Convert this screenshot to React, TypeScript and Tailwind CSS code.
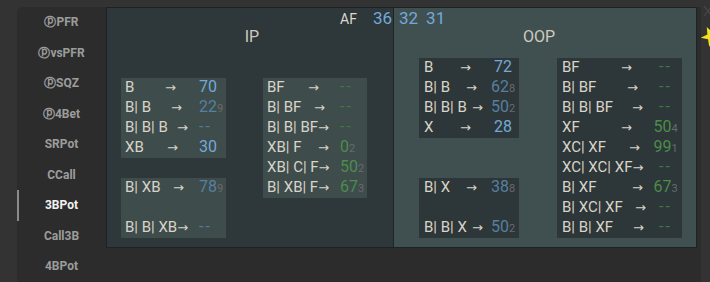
import React from 'react';

type Tone = 'b' | 'd' | 'g' | 'db' | 'dg';

interface Line {
  l: string;
  w: string;
  v: string;
  s?: string;
  c: Tone;
}

const toneClass: Record<Tone, string> = {
  b: 'text-[#74a9d9]',
  d: 'text-[#56809f]',
  g: 'text-[#4b8d4b]',
  db: 'text-[#587a95] tracking-[2px]',
  dg: 'text-[#3d7b3d] tracking-[2px]',
};

const navItems = ['ⓟPFR', 'ⓟvsPFR', 'ⓟSQZ', 'ⓟ4Bet', 'SRPot', 'CCall', '3BPot', 'Call3B', '4BPot'];

// IP side
const ipLeftA: Line[] = [
  { l: 'B', w: 'w-[40px]', v: '70', c: 'b' },
  { l: 'B| B', w: 'w-[46px]', v: '22', s: '9', c: 'd' },
  { l: 'B| B| B', w: 'w-[52px]', v: '--', c: 'db' },
  { l: 'XB', w: 'w-[42px]', v: '30', c: 'b' },
];
const ipLeftB: (Line | null)[] = [
  { l: 'B| XB', w: 'w-[48px]', v: '78', s: '9', c: 'd' },
  null,
  { l: 'B| B| XB', w: 'w-auto', v: '--', c: 'db' },
];
const ipRight: Line[] = [
  { l: 'BF', w: 'w-[41px]', v: '--', c: 'dg' },
  { l: 'B| BF', w: 'w-[47px]', v: '--', c: 'dg' },
  { l: 'B| B| BF', w: 'w-auto', v: '--', c: 'dg' },
  { l: 'XB| F', w: 'w-[51px]', v: '0', s: '2', c: 'g' },
  { l: 'XB| C| F', w: 'w-auto', v: '50', s: '2', c: 'g' },
  { l: 'B| XB| F', w: 'w-auto', v: '67', s: '3', c: 'g' },
];

// OOP side
const oopLeftA: Line[] = [
  { l: 'B', w: 'w-[36px]', v: '72', c: 'b' },
  { l: 'B| B', w: 'w-[42px]', v: '62', s: '8', c: 'd' },
  { l: 'B| B| B', w: 'w-[48px]', v: '50', s: '2', c: 'd' },
  { l: 'X', w: 'w-[36px]', v: '28', c: 'b' },
];
const oopLeftB: (Line | null)[] = [
  { l: 'B| X', w: 'w-[42px]', v: '38', s: '8', c: 'd' },
  null,
  { l: 'B| B| X', w: 'w-[48px]', v: '50', s: '2', c: 'd' },
];
const oopRight: Line[] = [
  { l: 'BF', w: 'w-[59px]', v: '--', c: 'dg' },
  { l: 'B| BF', w: 'w-[65px]', v: '--', c: 'dg' },
  { l: 'B| B| BF', w: 'w-[70px]', v: '--', c: 'dg' },
  { l: 'XF', w: 'w-[59px]', v: '50', s: '4', c: 'g' },
  { l: 'XC| XF', w: 'w-[67px]', v: '99', s: '1', c: 'g' },
  { l: 'XC| XC| XF', w: 'w-auto', v: '--', c: 'dg' },
  { l: 'B| XF', w: 'w-[70px]', v: '67', s: '3', c: 'g' },
  { l: 'B| XC| XF', w: 'w-[73px]', v: '--', c: 'dg' },
  { l: 'B| B| XF', w: 'w-[71px]', v: '--', c: 'dg' },
];

const Row: React.FC<{ line: Line | null; leftW: string; valCls: string }> = ({ line, leftW, valCls }) => {
  if (!line) return <div className="h-[20px]" />;
  return (
    <div className="flex h-[20px] items-baseline leading-[17px]">
      <div className={`flex shrink-0 items-baseline ${leftW}`}>
        <span className={`shrink-0 whitespace-nowrap text-[15px] ${line.w}`}>{line.l}</span>
        <span className="font-['DejaVu_Sans',sans-serif] text-[13px]">→</span>
      </div>
      <div className={`whitespace-nowrap ${valCls}`}>
        <span className={`text-[16px] ${toneClass[line.c]}`}>{line.v}</span>
        {line.s && <span className="text-[11px] text-[#6a6a6a]">{line.s}</span>}
      </div>
    </div>
  );
};

const Box: React.FC<{ rows: (Line | null)[]; cls: string; leftW: string; valCls: string }> = ({ rows, cls, leftW, valCls }) => (
  <div className={cls}>
    {rows.map((r, i) => (
      <Row key={i} line={r} leftW={leftW} valCls={valCls} />
    ))}
  </div>
);

const Star = () => (
  <svg width="22" height="22" viewBox="0 0 22 22" className="absolute left-[700px] top-[25px]">
    <polygon
      points="11,1 13.6,8 21,8.2 15.1,12.8 17.2,20 11,15.8 4.8,20 6.9,12.8 1,8.2 8.4,8"
      fill="#f2e21a"
      transform="rotate(-25 11 11)"
    />
  </svg>
);

export default function App() {
  return (
    <div className="relative h-[282px] w-[710px] overflow-hidden bg-[#333333] pl-[17px] pt-[7px] font-['Roboto',sans-serif] text-[#d8d4c8]">
      <div className="flex h-[275px] w-[684px] rounded-tl-[6px] bg-[#2c2c2c]">
        {/* sidebar */}
        <div className="flex w-[89px] shrink-0 flex-col">
          {navItems.map((n) => (
            <div
              key={n}
              className={`relative flex h-[30.5px] items-center justify-center text-[12px] font-bold ${
                n === '3BPot' ? 'text-[#f2f2f2]' : 'text-[#9c9c9c]'
              }`}
            >
              {n === '3BPot' && <span className="absolute left-0 top-0 h-full w-[2px] bg-[#8a8a8a]" />}
              {n}
            </div>
          ))}
        </div>

        {/* main panel */}
        <div className="relative flex h-[241px] w-[591px] shrink-0 border border-[#1d2224]">
          <div className="absolute left-[233px] top-0 z-10 flex items-baseline leading-[20px]">
            <span className="text-[14px] text-[#dcd8cc]">AF</span>
            <span className="ml-[16px] text-[17px] text-[#74a9d9]">36</span>
            <span className="ml-[7px] text-[17px] text-[#74a9d9]">32</span>
            <span className="ml-[8px] text-[17px] text-[#74a9d9]">31</span>
          </div>

          {/* IP */}
          <div className="flex w-[287px] shrink-0 flex-col border-r border-[#1d2427] bg-[#2e3739]">
            <div className="h-[50px] pl-[4px] pt-[20px] text-center text-[16px] leading-[18px] text-[#cfcbbf]">IP</div>
            <div className="flex gap-[37px] pl-[14px]">
              <div className="mt-[20px] flex flex-col gap-[20px]">
                <Box rows={ipLeftA} cls="w-[105px] bg-[#3e4c4c] pl-[4px]" leftW="w-[74px]" valCls="text-left" />
                <Box rows={ipLeftB} cls="w-[105px] bg-[#3e4c4c] pl-[4px]" leftW="w-[74px]" valCls="text-left" />
              </div>
              <div className="mt-[20px]">
                <Box rows={ipRight} cls="w-[104px] bg-[#3e4c4c] pl-[4px]" leftW="w-[73px]" valCls="text-left" />
              </div>
            </div>
          </div>

          {/* OOP */}
          <div className="flex flex-1 flex-col bg-[#405050]">
            <div className="h-[50px] pr-[12px] pt-[20px] text-center text-[16px] leading-[18px] text-[#cfcbbf]">OOP</div>
            <div className="flex gap-[38px] pl-[25px]">
              <div className="flex flex-col gap-[40px]">
                <Box rows={oopLeftA} cls="w-[100px] bg-[#2d3638] pl-[5px]" leftW="w-[63px]" valCls="w-[32px] text-center" />
                <Box rows={oopLeftB} cls="w-[100px] bg-[#2d3638] pl-[5px]" leftW="w-[63px]" valCls="w-[32px] text-center" />
              </div>
              <Box rows={oopRight} cls="w-[125px] bg-[#2d3638] pl-[5px]" leftW="w-[87px]" valCls="w-[33px] text-center" />
            </div>
          </div>
        </div>
      </div>

      {/* close mark and pin at the right edge */}
      <svg width="10" height="12" viewBox="0 0 10 12" className="absolute left-[703px] top-[5px]">
        <path d="M1 1 L9 11 M9 1 L1 11" stroke="#4a4a4a" strokeWidth="1.2" />
      </svg>
      <Star />
    </div>
  );
}
